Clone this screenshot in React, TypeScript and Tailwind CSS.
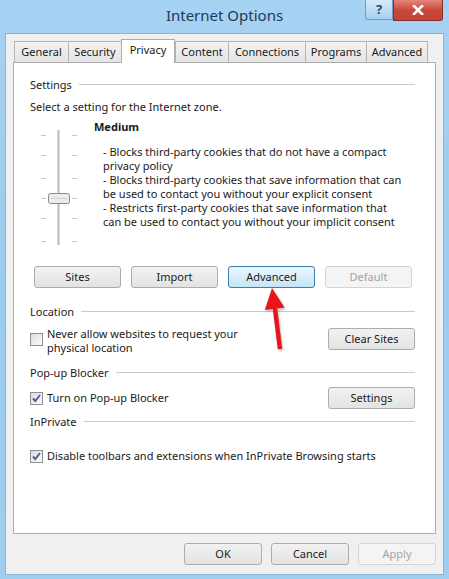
import React from "react";

function Check({ checked }: { checked?: boolean }) {
  return (
    <div className="w-[13px] h-[13px] shrink-0 border border-[#8e8f8f] bg-gradient-to-br from-[#dcdcdc] to-[#fcfcfc] flex items-center justify-center">
      {checked && (
        <svg width="11" height="11" viewBox="0 0 11 11">
          <path d="M2 5.5 L4.3 8 L9 2" fill="none" stroke="#4b5c9a" strokeWidth="1.9" />
        </svg>
      )}
    </div>
  );
}

function Btn({
  label,
  w = "w-[87px]",
  focused,
  disabled,
}: {
  label: string;
  w?: string;
  focused?: boolean;
  disabled?: boolean;
}) {
  let look = "border-[#acacac] bg-gradient-to-b from-[#f2f2f2] to-[#e3e3e3] text-[#1a1a1a]";
  if (focused) look = "border-[#3c7fb1] bg-gradient-to-b from-[#ecf7fd] to-[#c4e5f8] text-[#1a1a1a]";
  if (disabled) look = "border-[#d4d4d4] bg-[#f4f4f4] text-[#a3a3a3]";
  return (
    <div className={`${w} h-[22px] shrink-0 rounded-[3px] border flex items-center justify-center ${look}`}>
      {label}
    </div>
  );
}

function Group({ label }: { label: string }) {
  return (
    <div className="flex items-center h-[15px] leading-[15px]">
      <span>{label}</span>
      <div className="flex-1 ml-[7px] h-px bg-[#c9c9c9]" />
    </div>
  );
}

const tabs = [
  { name: "General", w: "w-[54px]" },
  { name: "Security", w: "w-[53px]" },
  { name: "Privacy", w: "w-[54px]", active: true },
  { name: "Content", w: "w-[53px]" },
  { name: "Connections", w: "w-[77px]" },
  { name: "Programs", w: "w-[61px]" },
  { name: "Advanced", w: "w-[62px]" },
];

function Slider() {
  const ticks = [16, 36, 59, 79, 99, 122];
  return (
    <svg width="64" height="129" viewBox="0 0 64 129" className="shrink-0">
      <line x1="28.5" y1="11" x2="28.5" y2="126" stroke="#b9b9b9" strokeWidth="2" />
      {ticks.map((y) => (
        <g key={y}>
          <line x1="11" y1={y + 0.5} x2="16" y2={y + 0.5} stroke="#c8c8c8" />
          <line x1="42" y1={y + 0.5} x2="47" y2={y + 0.5} stroke="#c8c8c8" />
        </g>
      ))}
      <rect x="18.5" y="74.5" width="21" height="10" rx="2" fill="#ececec" stroke="#8a8a8a" />
      <line x1="21" y1="79.5" x2="37" y2="79.5" stroke="#d0d0d0" />
    </svg>
  );
}

export default function App() {
  return (
    <div className="relative w-[449px] h-[579px] flex flex-col bg-gradient-to-b from-[#a6d2f3] via-[#9bcbef] to-[#9fcef1] font-['Noto_Sans',sans-serif] text-[11px] text-[#1a1a1a]">
      {/* title bar */}
      <div className="h-[33px] shrink-0 grid grid-cols-[1fr_auto_1fr]">
        <div />
        <div className="pt-[4px] text-[15px] leading-[22px] text-[#1e395b]">Internet Options</div>
        <div className="flex justify-end pr-[6px]">
          <div className="w-[28px] h-[20px] border border-[#6f9cc3] border-t-0 rounded-bl-[3px] bg-gradient-to-b from-[#d5eaf9] to-[#a7d0ef] flex items-center justify-center text-[13px] font-bold text-[#2b4a6b]">
            ?
          </div>
          <div className="w-[50px] h-[21px] border border-[#8a2b22] border-t-0 rounded-br-[3px] bg-gradient-to-b from-[#e3867c] via-[#c9473b] to-[#c2443a] flex items-center justify-center">
            <svg width="12" height="10" viewBox="0 0 12 10">
              <path d="M2 1 L10 9 M10 1 L2 9" stroke="#ffffff" strokeWidth="2.6" strokeLinecap="square" />
            </svg>
          </div>
        </div>
      </div>

      {/* client area */}
      <div className="flex-1 mx-[5px] mb-[4px] bg-[#f0f0f0] border border-[#88b4d8] px-[7px] pt-[5px] flex flex-col">
        {/* tabs */}
        <div className="flex items-end h-[23px] pl-[1px]">
          {tabs.map((t) =>
            t.active ? (
              <div
                key={t.name}
                className={`${t.w} h-[24px] -mb-px relative z-10 bg-white border border-b-0 border-[#adadad] flex justify-center pt-[2px] leading-[16px]`}
              >
                {t.name}
              </div>
            ) : (
              <div
                key={t.name}
                className={`${t.w} h-[21px] border border-b-0 border-r-0 last:border-r border-[#b4b4b4] bg-gradient-to-b from-[#f3f3f3] to-[#e4e4e4] flex items-center justify-center leading-[16px]`}
              >
                {t.name}
              </div>
            )
          )}
        </div>

        {/* panel */}
        <div className="h-[472px] shrink-0 bg-white border border-[#adadad] pl-[16px] pr-[20px] pt-[14px] flex flex-col">
          <Group label="Settings" />
          <div className="mt-[7px] leading-[15px]">Select a setting for the Internet zone.</div>

          <div className="mt-[5px] flex">
            <Slider />
            <div className="flex flex-col">
              <div className="font-bold leading-[15px]">Medium</div>
              <div className="mt-[11px] pl-[9px] leading-[14px] whitespace-nowrap">
                <div>- Blocks third-party cookies that do not have a compact</div>
                <div>privacy policy</div>
                <div>- Blocks third-party cookies that save information that can</div>
                <div>be used to contact you without your explicit consent</div>
                <div>- Restricts first-party cookies that save information that</div>
                <div>can be used to contact you without your implicit consent</div>
              </div>
            </div>
          </div>

          <div className="mt-[18px] pl-[4px] flex gap-[10px]">
            <Btn label="Sites" />
            <Btn label="Import" />
            <Btn label="Advanced" focused />
            <Btn label="Default" disabled />
          </div>

          <div className="mt-[16px]">
            <Group label="Location" />
          </div>
          <div className="mt-[8px] flex justify-between">
            <div className="flex gap-[4px]">
              <div className="pt-[6px]">
                <Check />
              </div>
              <div className="leading-[14px]">
                <div>Never allow websites to request your</div>
                <div>physical location</div>
              </div>
            </div>
            <div className="mt-[1px]">
              <Btn label="Clear Sites" />
            </div>
          </div>

          <div className="mt-[10px]">
            <Group label="Pop-up Blocker" />
          </div>
          <div className="mt-[7px] flex items-center justify-between h-[22px]">
            <div className="flex items-center gap-[4px]">
              <Check checked />
              <span>Turn on Pop-up Blocker</span>
            </div>
            <Btn label="Settings" />
          </div>

          <div className="mt-[5px]">
            <Group label="InPrivate" />
          </div>
          <div className="mt-[20px] flex items-center gap-[4px] h-[15px]">
            <Check checked />
            <span>Disable toolbars and extensions when InPrivate Browsing starts</span>
          </div>
        </div>

        {/* dialog buttons */}
        <div className="mt-[9px] flex justify-end gap-[9px]">
          <Btn label="OK" w="w-[78px]" />
          <Btn label="Cancel" w="w-[78px]" />
          <Btn label="Apply" w="w-[78px]" disabled />
        </div>
      </div>

      {/* red annotation arrow */}
      <svg
        className="absolute left-[258px] top-[284px] drop-shadow-[1px_2px_1px_rgba(0,0,0,0.25)]"
        width="36"
        height="70"
        viewBox="0 0 36 70"
      >
        <line x1="16.8" y1="23" x2="22" y2="65" stroke="#e8161b" strokeWidth="4.5" />
        <polygon points="14,4 26.6,23.5 6.8,26.1" fill="#e8161b" />
      </svg>
    </div>
  );
}
